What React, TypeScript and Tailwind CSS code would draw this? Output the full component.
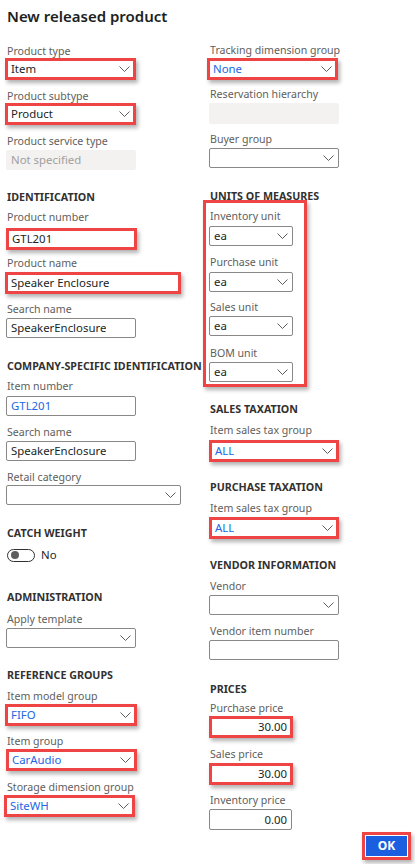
import React from "react";

const Chevron = () => (
  <svg width="11" height="6" viewBox="0 0 11 6" className="shrink-0">
    <path d="M0.5 0.5 L5.5 5.5 L10.5 0.5" stroke="#605e5c" strokeWidth="1" fill="none" />
  </svg>
);

const Label = ({ children, cls = "" }: { children: React.ReactNode; cls?: string }) => (
  <div className={`h-[14px] leading-[14px] text-[10.6px] text-[#605e5c] whitespace-nowrap pl-[1px] ${cls}`}>{children}</div>
);

const Header = ({ children, cls = "" }: { children: React.ReactNode; cls?: string }) => (
  <div className={`h-[14px] leading-[14px] text-[10.7px] font-bold text-[#323130] whitespace-nowrap pl-[1px] ${cls}`}>{children}</div>
);

type FP = { value?: string; blue?: boolean; chevron?: boolean; right?: boolean; cls?: string };

const Field = ({ value = "", blue, chevron, right, cls = "" }: FP) => (
  <div
    className={`h-[20px] border border-[#8a8886] rounded-[2px] bg-white flex items-center pl-[4px] pr-[4px] text-[11.4px] ${right ? "justify-end" : "justify-between"} ${blue ? "text-[#2266e3]" : "text-[#201f1e]"} ${cls}`}
  >
    <span className="truncate leading-[16px]">{value}</span>
    {chevron && <Chevron />}
  </div>
);

const Red = ({ value = "", blue, chevron, right, cls = "" }: FP) => (
  <div
    className={`h-[22px] border-[3px] border-[#ef4444] bg-white shadow-[2px_3px_4px_rgba(0,0,0,0.3)] flex items-center pl-[3px] pr-[3px] text-[11.4px] ${right ? "justify-end" : "justify-between"} ${blue ? "text-[#2266e3]" : "text-[#201f1e]"} ${cls}`}
  >
    <span className="truncate leading-[16px]">{value}</span>
    {chevron && <Chevron />}
  </div>
);

const Disabled = ({ value = "", cls = "" }: { value?: string; cls?: string }) => (
  <div className={`h-[20px] bg-[#f3f2f1] rounded-[2px] flex items-center pl-[5px] text-[11.4px] text-[#a19f9d] ${cls}`}>{value}</div>
);

export default function App() {
  return (
    <div className="w-[415px] h-[864px] bg-white overflow-hidden font-['Segoe_UI','Noto_Sans',sans-serif]">
      <div className="h-[36px] pt-[5px] pl-[7px] text-[15px] leading-[22px] font-semibold text-[#201f1e]">New released product</div>
      <div className="flex">
        <div className="flex flex-col w-[202px] ml-[6px]">
          <Label cls="mt-[8px]">Product type</Label>
          <Red cls="ml-[-1px] w-[131px]" chevron value="Item" />
          <Label cls="mt-[9px]">Product subtype</Label>
          <Red cls="ml-[-1px] w-[131px]" chevron value="Product" />
          <Label cls="mt-[9px]">Product service type</Label>
          <Disabled cls="mt-[2px] w-[130px]" value="Not specified" />
          <Header cls="mt-[20px]">IDENTIFICATION</Header>
          <Label cls="mt-[6px]">Product number</Label>
          <Red cls="mt-[4px] w-[131px]" value="GTL201" />
          <Label cls="mt-[6px]">Product name</Label>
          <Red cls="mt-[2px] ml-[-1px] w-[176px]" value="Speaker Enclosure" />
          <Label cls="mt-[8px]">Search name</Label>
          <Field cls="mt-[2px] w-[130px]" value="SpeakerEnclosure" />
          <Header cls="mt-[21px]">COMPANY-SPECIFIC IDENTIFICATION</Header>
          <Label cls="mt-[6px]">Item number</Label>
          <Field cls="mt-[3px] w-[130px]" blue value="GTL201" />
          <Label cls="mt-[9px]">Search name</Label>
          <Field cls="mt-[2px] w-[130px]" value="SpeakerEnclosure" />
          <Label cls="mt-[9px]">Retail category</Label>
          <Field cls="mt-[1px] w-[175px]" chevron />
          <Header cls="mt-[21px]">CATCH WEIGHT</Header>
          <div className="mt-[8px] h-[14px] flex items-center pl-[1px]">
            <div className="w-[28px] h-[13px] rounded-full border border-[#323130] flex items-center pl-[3px]">
              <div className="w-[8px] h-[8px] rounded-full bg-[#605e5c]" />
            </div>
            <span className="ml-[6px] text-[11.4px] text-[#201f1e] leading-[14px]">No</span>
          </div>
          <Header cls="mt-[28px]">ADMINISTRATION</Header>
          <Label cls="mt-[8px]">Apply template</Label>
          <Field cls="mt-[2px] w-[130px]" chevron />
          <Header cls="mt-[20px]">REFERENCE GROUPS</Header>
          <Label cls="mt-[7px]">Item model group</Label>
          <Red cls="mt-[1px] ml-[-1px] w-[132px]" blue chevron value="FIFO" />
          <Label cls="mt-[8px]">Item group</Label>
          <Red cls="mt-[1px] w-[131px]" blue chevron value="CarAudio" />
          <Label cls="mt-[9px]">Storage dimension group</Label>
          <Red cls="mt-[1px] ml-[-2px] w-[131px]" blue chevron value="SiteWH" />
        </div>
        <div className="flex flex-col w-[207px] ml-[2px]">
          <Label cls="mt-[7px]">Tracking dimension group</Label>
          <Red cls="mt-[1px] ml-[-2px] w-[131px]" blue chevron value="None" />
          <Label cls="mt-[7px]">Reservation hierarchy</Label>
          <Disabled cls="mt-[2px] w-[130px] h-[21px]" />
          <Label cls="mt-[8px]">Buyer group</Label>
          <Field cls="mt-[2px] w-[130px]" chevron />
          <Header cls="mt-[21px]">UNITS OF MEASURES</Header>
          <div className="mt-[-3px] ml-[-6px] w-[104px] border-[3px] border-[#ef4444] shadow-[2px_3px_4px_rgba(0,0,0,0.3)] bg-white pl-[3px] pt-[6px] pb-[2px] flex flex-col">
            <Label>Inventory unit</Label>
            <Field cls="mt-[3px] w-[84px]" chevron value="ea" />
            <Label cls="mt-[9px]">Purchase unit</Label>
            <Field cls="mt-[3px] w-[84px]" chevron value="ea" />
            <Label cls="mt-[8px]">Sales unit</Label>
            <Field cls="mt-[2px] w-[84px]" chevron value="ea" />
            <Label cls="mt-[10px]">BOM unit</Label>
            <Field cls="mt-[2px] w-[84px]" chevron value="ea" />
          </div>
          <Header cls="mt-[15px]">SALES TAXATION</Header>
          <Label cls="mt-[7px]">Item sales tax group</Label>
          <Red cls="mt-[3px] w-[130px] h-[21px]" blue chevron value="ALL" />
          <Header cls="mt-[18px]">PURCHASE TAXATION</Header>
          <Label cls="mt-[7px]">Item sales tax group</Label>
          <Red cls="mt-[2px] w-[130px] h-[21px]" blue chevron value="ALL" />
          <Header cls="mt-[19px]">VENDOR INFORMATION</Header>
          <Label cls="mt-[7px]">Vendor</Label>
          <Field cls="mt-[2px] w-[130px]" chevron />
          <Label cls="mt-[9px]">Vendor item number</Label>
          <Field cls="mt-[2px] w-[130px]" />
          <Header cls="mt-[22px]">PRICES</Header>
          <Label cls="mt-[5px]">Purchase price</Label>
          <Red cls="mt-[1px] w-[84px]" right value="30.00" />
          <Label cls="mt-[9px]">Sales price</Label>
          <Red cls="mt-[2px] w-[84px] h-[21px]" right value="30.00" />
          <Label cls="mt-[8px]">Inventory price</Label>
          <Field cls="mt-[2px] w-[83px] h-[21px]" right value="0.00" />
          <div className="mt-[2px] flex justify-end pr-[4px]">
            <div className="w-[49px] h-[28px] border-[3px] border-[#ef4444] shadow-[2px_3px_4px_rgba(0,0,0,0.3)] bg-white p-[1px]">
              <div className="w-full h-full bg-[#1a5fe0] flex items-center justify-center text-white text-[12px] font-bold">OK</div>
            </div>
          </div>
        </div>
      </div>
    </div>
  );
}
